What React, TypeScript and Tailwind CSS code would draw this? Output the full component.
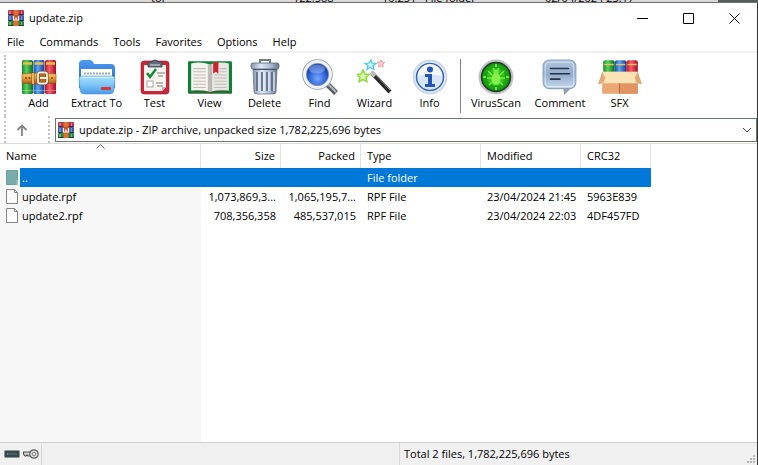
import { useState } from 'react';
import type { ReactNode } from 'react';

const BooksIcon = ({ className }: { className: string }) => (
  <svg viewBox="0 0 16 16" className={className}>
    <rect x="0" y="0" width="16" height="5" rx="1" fill="#b8354f" />
    <rect x="0" y="5" width="16" height="6" rx="1" fill="#3a59b4" />
    <rect x="0" y="11" width="16" height="5" rx="1" fill="#1f8a41" />
    <path d="M0 4.500h16M0 10.500h16M0 15.500h16" stroke="#232338" strokeOpacity=".75" strokeWidth="1" />
    <path d="M2 1v3M2 12v3" stroke="#f0e2c0" strokeOpacity=".8" strokeWidth="1" />
    <path d="M2 6v4" stroke="#c9d6f5" strokeOpacity=".8" strokeWidth="1" />
    <path d="M13.500 1v3M13.500 6v4M13.500 12v3" stroke="#e8c8c8" strokeOpacity=".5" strokeWidth="1" />
    <rect x="5.500" y="0" width="5" height="16" fill="#e2702c" />
    <rect x="4.500" y="5" width="7" height="6" fill="#c2542c" />
    <path d="M5.500 6v4h5V6M8 7.500V10" stroke="#fff" strokeWidth="1.200" fill="none" />
  </svg>
);

const Icons = {
  add: (
    <svg viewBox="0 0 36 36" className="w-9 h-9">
      <defs>
        <linearGradient id="bookG"><stop offset="0" stopColor="#128a2c" /><stop offset=".4" stopColor="#58d05a" /><stop offset="1" stopColor="#0b6b20" /></linearGradient>
        <linearGradient id="bookB"><stop offset="0" stopColor="#1b4fae" /><stop offset=".4" stopColor="#5aa5f2" /><stop offset="1" stopColor="#163a8e" /></linearGradient>
        <linearGradient id="bookR"><stop offset="0" stopColor="#b3122a" /><stop offset=".4" stopColor="#fb5a68" /><stop offset="1" stopColor="#a30d22" /></linearGradient>
        <linearGradient id="strap" x2="0" y2="1"><stop offset="0" stopColor="#f9d27c" /><stop offset=".5" stopColor="#e59a36" /><stop offset="1" stopColor="#a55b16" /></linearGradient>
      </defs>
      <rect x="1" y="1" width="11" height="34" rx="1.5" fill="url(#bookG)" />
      <rect x="12.5" y="1" width="11" height="34" rx="1.5" fill="url(#bookB)" />
      <rect x="24" y="1" width="11" height="34" rx="1.5" fill="url(#bookR)" />
      <path d="M2 4.500h9M13.500 4.500h9M25 4.500h9" stroke="#eac04a" strokeWidth="2.500" />
      <path d="M1 31.500h11M12.500 31.500h11M24 31.500h11" stroke="#fff" strokeOpacity=".35" />
      <path d="M1 15q17-2 34 0v9q-17 2-34 0z" fill="url(#strap)" stroke="#8d4a12" strokeWidth=".6" />
      <path d="M12 13.500v12" stroke="#8d4a12" strokeWidth="3" />
      <path d="M12 14v11" stroke="#ffd78a" strokeWidth="1.500" />
      <rect x="17" y="13.500" width="9" height="11" rx="2" fill="#b8671c" stroke="#6b4a22" strokeWidth="3" />
      <rect x="17" y="13.500" width="9" height="11" rx="2" fill="none" stroke="#f0ece2" strokeWidth="1.800" />
      <path d="M19 19h8" stroke="#f2f2f2" strokeWidth="2" />
      <circle cx="5" cy="19" r="1" fill="#7c3f0c" /><circle cx="8.500" cy="19" r="1" fill="#7c3f0c" /><circle cx="31" cy="19" r="1" fill="#7c3f0c" />
    </svg>
  ),
  extract: (
    <svg viewBox="0 0 38 36" className="w-10 h-9">
      <defs>
        <linearGradient id="folderBack" x2="0" y2="1"><stop offset="0" stopColor="#4d9bf0" /><stop offset="1" stopColor="#1f5fca" /></linearGradient>
        <linearGradient id="folderFront" x2="0" y2="1"><stop offset="0" stopColor="#a8e0fb" /><stop offset=".5" stopColor="#7cc5f7" /><stop offset="1" stopColor="#4a98e6" /></linearGradient>
      </defs>
      <path d="M1 5q0-4 4-4h7q2 0 3 2l1 2h17q4 0 4 4v20H1z" fill="url(#folderBack)" />
      <path d="M3 10h31v10H3z" fill="#fff" />
      <path d="M6 14.500h26" stroke="#9dabba" strokeWidth="2" strokeDasharray="2 1" />
      <path d="M1 20q0-3 3-3h30q3 0 3 3l-1 11q-.5 4-4 4H6q-3.500 0-4-4z" fill="url(#folderFront)" stroke="#559ce4" strokeWidth=".6" />
      <path d="M3 18.500h32" stroke="#d4f2ff" />
      <rect x="23" y="28" width="10" height="3" rx="1" fill="#d93636" />
    </svg>
  ),
  test: (
    <svg viewBox="0 0 30 36" className="w-8 h-9">
      <rect x="1" y="2" width="28" height="33" rx="3" fill="#c9273a" stroke="#9c1325" strokeWidth=".6" />
      <path d="M4 6h22v22l-4 4H4z" fill="#f6f4ef" />
      <path d="M26 28h-4v4z" fill="#b7b7b7" />
      <path d="M8 8V4q0-1 1-1h3q0-2 3-2t3 2h3q1 0 1 1v4z" fill="#606a78" stroke="#3d4149" strokeWidth=".8" />
      <path d="M10 6h10" stroke="#dfe3ea" />
      <path d="M7 14l3 4 6-8" fill="none" stroke="#19873b" strokeWidth="2.500" />
      <path d="M17 14h8M18 17h5M16 24h7M17 27h6" stroke="#7b7b7b" />
      <rect x="7" y="22" width="6" height="6" fill="#fff" stroke="#a7a7a7" />
    </svg>
  ),
  view: (
    <svg viewBox="0 0 42 34" className="w-11 h-9">
      <rect x="0" y="2" width="42" height="31" rx="1" fill="#128036" />
      <path d="M3 4q9-2 18 1v26q-9-2-18-1z" fill="#f4f2ee" />
      <path d="M39 4q-9-2-18 1v26q9-2 18-1z" fill="#e9e7e3" />
      <path d="M19 5h4v26h-4z" fill="#9b9690" opacity=".6" />
      <path d="M5 9h12M5 12h12M5 15h12M5 18h12M5 21h12M5 24h12M5 27h12M30 9h7M30 12h7M25 15h12M25 18h12M25 21h12M25 24h12M25 27h12" stroke="#c2beb7" strokeWidth="1" />
      <path d="M24 3h5v11l-2.500-2-2.500 2z" fill="#cf2230" />
      <path d="M2 32q10-2 19 0 9-2 19 0" stroke="#63452d" strokeWidth="1" fill="none" />
    </svg>
  ),
  trash: (
    <svg viewBox="0 0 30 36" className="w-8 h-9">
      <defs><linearGradient id="bin"><stop offset="0" stopColor="#8595ab" /><stop offset=".35" stopColor="#dce8f5" /><stop offset=".7" stopColor="#abbcd2" /><stop offset="1" stopColor="#66758a" /></linearGradient></defs>
      <path d="M10 4V1h10v3" fill="none" stroke="#717b87" strokeWidth="2" />
      <path d="M3 10h24l-1 23q0 2-3 2H7q-3 0-3-2z" fill="url(#bin)" stroke="#5d6b7d" strokeWidth=".7" />
      <path d="M7 13v19M12 13v19M17 13v19M22 13v19" stroke="#5f7088" strokeWidth="1.800" />
      <path d="M9 13v19M14 13v19M19 13v19M24 13v19" stroke="#edf4fa" strokeWidth="1.200" />
      <rect x="1" y="4" width="28" height="6" rx="2" fill="url(#bin)" stroke="#5c6673" strokeWidth=".8" />
      <path d="M3 10.500h24" stroke="#4a5665" />
    </svg>
  ),
  find: (
    <svg viewBox="0 0 36 36" className="w-9 h-9">
      <defs><radialGradient id="lens" cy=".65"><stop offset="0" stopColor="#78a8ff" /><stop offset=".6" stopColor="#3269dc" /><stop offset="1" stopColor="#173fa8" /></radialGradient></defs>
      <path d="M24 24l10 10" stroke="#5b5f64" strokeWidth="5.500" />
      <path d="M25 24l9 9" stroke="#b2b6bb" strokeWidth="2" />
      <circle cx="15.500" cy="15.500" r="13" fill="url(#lens)" stroke="#8d98a5" strokeWidth="4.500" />
      <circle cx="15.500" cy="15.500" r="13" fill="none" stroke="#eef2f5" strokeWidth="3" />
      <ellipse cx="15" cy="10" rx="8" ry="4.500" fill="#b8d1ff" opacity=".4" />
    </svg>
  ),
  wizard: (
    <svg viewBox="0 0 36 36" className="w-9 h-9">
      <path d="M15 14l18 19" stroke="#292929" strokeWidth="4" />
      <path d="M16 13l17 18" stroke="#929292" strokeWidth="1" />
      <path d="M14 13l4 4" stroke="#bdbdbd" strokeWidth="4" />
      <path d="M6 11l2 4 4 .5-3 3 1 4-4-2-4 2 1-4-3-3 4-.5z" fill="#d6f7a8" stroke="#8edb3c" strokeWidth="1.500" />
      <path d="M14 1l1 3 4 .5-3 2 1 4-4-2-3 2 1-4-3-2 4-.5z" fill="#c8f6ff" stroke="#4cc6ec" strokeWidth="1.200" />
      <path d="M24 1l.8 2 3 .4-2 1.600.4 3-2.200-1.300L21.500 8l.6-2.700-2-1.900 2.700-.4z" fill="#ffd3d6" stroke="#f08791" strokeWidth=".8" />
    </svg>
  ),
  info: (
    <svg viewBox="0 0 36 36" className="w-9 h-9">
      <circle cx="18" cy="18" r="16.500" fill="#e4edf8" stroke="#c6d4e6" strokeWidth="1.500" />
      <circle cx="18" cy="18" r="13.500" fill="#d8e6f8" stroke="#3866ba" strokeWidth="1.500" />
      <path d="M6 17a12 12 0 0124 0q-12-3-24 0" fill="#fff" opacity=".7" />
      <circle cx="18" cy="10.500" r="3" fill="#2454b8" />
      <path d="M13 15h7v10h3v3H13v-3h3v-7h-3z" fill="#2454b8" />
    </svg>
  ),
  virus: (
    <svg viewBox="0 0 36 36" className="w-9 h-9">
      <defs><radialGradient id="radar"><stop offset="0" stopColor="#5fe024" /><stop offset=".6" stopColor="#24b815" /><stop offset="1" stopColor="#07770a" /></radialGradient></defs>
      <circle cx="18" cy="18" r="16" fill="url(#radar)" stroke="#c2c3c9" strokeWidth="3" />
      <circle cx="18" cy="18" r="14.500" fill="none" stroke="#253b27" strokeWidth="1.500" />
      <path d="M18 4v28M4 18h28M8 8l20 20M28 8L8 28" stroke="#129a0f" strokeWidth=".7" />
      <circle cx="18" cy="18" r="10" fill="none" stroke="#168c10" strokeWidth=".8" />
      <path d="M18 5v3M18 28v3M5 18h3M28 18h3" stroke="#8cf164" strokeWidth="1.500" />
      <path d="M10 12l4 4M26 12l-4 4M9 19h5M27 19h-5M11 26l4-4M25 26l-4-4M15 9l2 3M21 9l-2 3" stroke="#78e947" strokeWidth="1.500" />
      <ellipse cx="18" cy="20" rx="4.500" ry="6" fill="#86f04e" /><circle cx="18" cy="13" r="2.500" fill="#78e947" />
    </svg>
  ),
  comment: (
    <svg viewBox="0 0 34 34" className="w-9 h-9">
      <defs><linearGradient id="bubble" x2="0" y2="1"><stop offset="0" stopColor="#b3c7df" /><stop offset=".5" stopColor="#93abcd" /><stop offset="1" stopColor="#cad9eb" /></linearGradient></defs>
      <path d="M20 27h8l-7 7z" fill="#8f9fb3" />
      <rect x="1" y="1" width="31" height="27" rx="6" fill="url(#bubble)" stroke="#8fa3bd" />
      <rect x="3" y="3" width="27" height="23" rx="4" fill="none" stroke="#e2edf8" strokeOpacity=".7" />
      <path d="M8 9h17M8 14h18M8 19h9" stroke="#273447" strokeWidth="1.500" strokeLinecap="round" />
    </svg>
  ),
  sfx: (
    <svg viewBox="0 0 42 34" className="w-11 h-9">
      <rect x="5" y="1" width="11" height="18" rx="2" fill="url(#bookG)" />
      <rect x="16" y="1" width="11" height="18" rx="2" fill="url(#bookB)" />
      <rect x="27" y="1" width="11" height="18" rx="2" fill="url(#bookR)" />
      <path d="M6 5h9M17 5h9M28 5h9" stroke="#e5c25b" strokeWidth="1.500" />
      <path d="M4 12h34v21H4z" fill="#e9a774" />
      <path d="M21 20h17v13H21z" fill="#df9462" />
      <path d="M4 12h34l1 11H3z" fill="#fae3b4" />
      <path d="M4 12l-4 12 5-1 2-5zM38 12l4 12-5-1-2-5z" fill="#e0aa7a" />
      <path d="M20.500 23v10" stroke="#b86e43" />
    </svg>
  ),
};

type Tool = { label: string; icon: ReactNode; width: string };

const tools: Tool[] = [
  { label: 'Add', icon: Icons.add, width: 'w-[55px]' },
  { label: 'Extract To', icon: Icons.extract, width: 'w-[61px]' },
  { label: 'Test', icon: Icons.test, width: 'w-[55px]' },
  { label: 'View', icon: Icons.view, width: 'w-[55px]' },
  { label: 'Delete', icon: Icons.trash, width: 'w-[55px]' },
  { label: 'Find', icon: Icons.find, width: 'w-[55px]' },
  { label: 'Wizard', icon: Icons.wizard, width: 'w-[55px]' },
  { label: 'Info', icon: Icons.info, width: 'w-[55px]' },
];

const extraTools: Tool[] = [
  { label: 'VirusScan', icon: Icons.virus, width: 'w-16' },
  { label: 'Comment', icon: Icons.comment, width: 'w-16' },
  { label: 'SFX', icon: Icons.sfx, width: 'w-[55px]' },
];

const files = [
  { name: '..', size: '', packed: '', type: 'File folder', modified: '', crc: '' },
  { name: 'update.rpf', size: '1,073,869,3...', packed: '1,065,195,7...', type: 'RPF File', modified: '23/04/2024 21:45', crc: '5963E839' },
  { name: 'update2.rpf', size: '708,356,358', packed: '485,537,015', type: 'RPF File', modified: '23/04/2024 22:03', crc: '4DF457FD' },
];

const ToolButton = ({ label, icon, width }: Tool) => (
  <button className={`${width} shrink-0 flex flex-col items-center whitespace-nowrap`}>
    {icon}
    <span>{label}</span>
  </button>
);

const FileIcon = ({ folder }: { folder: boolean }) => (
  <svg viewBox="0 0 14 17" className="w-3.5 h-[17px] shrink-0">
    {folder ? (
      <>
        <path d="M1.500 1.500h11v14h-11z" fill="#79abaa" stroke="#6ba09f" />
        <path d="M11 11h2v5h-2z" fill="#8bbdbc" />
      </>
    ) : (
      <>
        <path d="M1.500 1.500h8l3 3v11h-11z" fill="#fbfbfb" stroke="#858585" />
        <path d="M9.500 1.500v3h3" fill="none" stroke="#858585" />
      </>
    )}
  </svg>
);

const App = () => {
  const [selected, setSelected] = useState('..');

  return (
    <div className="h-screen flex flex-col overflow-hidden bg-white font-['Open_Sans','Noto_Sans',sans-serif] text-[11px] leading-4 text-black cursor-default">
      {/* Window behind */}
      <div className="h-[3px] shrink-0 flex items-end overflow-hidden bg-[#d8d8d8] border-b border-[#707070] leading-2 whitespace-nowrap">
        <span className="w-[293px] pl-[151px]">tof</span>
        <span className="w-[89px]">122.588</span>
        <span className="w-[43px]">10.251</span>
        <span className="w-[120px]">File folder</span>
        <span className="w-[173px]">02/04/2024 23:17</span>
        <span className="flex-1 h-3 bg-[#555b58]" />
      </div>

      <div className="flex-1 min-h-0 flex flex-col border-r border-[#333]">
        {/* Title bar */}
        <header className="h-[30px] shrink-0 flex items-center pl-2">
          <BooksIcon className="w-4 h-4" />
          <h1 className="pl-[5px] flex-1">update.zip</h1>
          <button aria-label="Minimize" className="w-[46px] h-full grid place-items-center">
            <svg viewBox="0 0 11 11" className="w-[11px] h-[11px]"><path d="M0 5.500h11" stroke="#000" /></svg>
          </button>
          <button aria-label="Maximize" className="w-[46px] h-full grid place-items-center">
            <svg viewBox="0 0 11 11" className="w-[11px] h-[11px]"><path d="M.5.500h10v10H.5z" stroke="#000" fill="none" /></svg>
          </button>
          <button aria-label="Close" className="w-[46px] h-full grid place-items-center">
            <svg viewBox="0 0 11 11" className="w-[11px] h-[11px]"><path d="M.5.500l10 10M10.500.500l-10 10" stroke="#000" /></svg>
          </button>
        </header>

        <nav className="h-[18px] shrink-0 flex items-center gap-[15px] pl-[7px]">
          {['File', 'Commands', 'Tools', 'Favorites', 'Options', 'Help'].map((item) => (
            <button key={item}>{item}</button>
          ))}
        </nav>

        {/* Toolbar */}
        <div className="h-[65px] shrink-0 flex pl-1 pt-1.5 border-t-2 border-[#f0f0f0]">
          <div className="w-[7px] shrink-0 -mt-1 border-l-2 border-dotted border-[#c4c4c4]" />
          {tools.map((t) => <ToolButton key={t.label} {...t} />)}
          <div className="w-px h-[54px] shrink-0 mx-[3px] bg-[#808080]" />
          {extraTools.map((t) => <ToolButton key={t.label} {...t} />)}
        </div>

        {/* Address bar */}
        <div className="h-[27px] shrink-0 flex items-center pl-1">
          <div className="w-[7px] h-full border-l-2 border-dotted border-[#c4c4c4]" />
          <button aria-label="Up one level" className="w-[37px] h-full pl-[5px] flex items-center">
            <svg viewBox="0 0 12 12" className="w-3 h-3"><path d="M6 12V1.500M1.500 6L6 1.500 10.500 6" fill="none" stroke="#858585" strokeWidth="1.800" /></svg>
          </button>
          <div className="w-[7px] h-full border-l-2 border-dotted border-[#c4c4c4]" />
          <div className="flex-1 h-6 flex items-center pl-0.5 pr-1 border border-[#6f756f]">
            <BooksIcon className="w-4 h-4" />
            <select aria-label="Address" className="flex-1 appearance-none pl-[5px] outline-none">
              <option>update.zip - ZIP archive, unpacked size 1,782,225,696 bytes</option>
            </select>
            <svg viewBox="0 0 10 6" className="w-2.5 h-1.5 pointer-events-none"><path d="M1 1l4 4 4-4" fill="none" stroke="#444" /></svg>
          </div>
        </div>

        {/* File list */}
        <main className="flex-1 min-h-0 border-t border-[#dcdcdc]">
          <table className="w-full h-full table-fixed border-separate border-spacing-0 text-left">
            <colgroup>
              <col className="w-[201px]" />
              <col className="w-20" />
              <col className="w-20" />
              <col className="w-[120px]" />
              <col className="w-[100px]" />
              <col className="w-[70px]" />
              <col />
            </colgroup>
            <thead>
              <tr className="h-6 *:font-normal *:p-0 *:border-r *:border-[#e2e2e2]">
                <th className="relative">
                  <span className="pl-1.5">Name</span>
                  <svg viewBox="0 0 9 5" className="absolute top-0 left-24 w-[9px] h-[5px]"><path d="M.5 4.500l4-4 4 4" fill="none" stroke="#666" /></svg>
                </th>
                <th className="text-right"><span className="pr-[5px]">Size</span></th>
                <th className="text-right"><span className="pr-[5px]">Packed</span></th>
                <th><span className="pl-1.5">Type</span></th>
                <th><span className="pl-1.5">Modified</span></th>
                <th><span className="pl-1.5">CRC32</span></th>
                <td className="border-r-0!" />
              </tr>
            </thead>
            <tbody>
              {files.map((f) => {
                const active = f.name === selected;
                const cell = active ? 'p-0 bg-[#0078d7] text-white' : 'p-0';
                return (
                  <tr key={f.name} className="h-[19px] whitespace-nowrap" onClick={() => setSelected(f.name)}>
                    <td className="p-0 bg-[#f7f7f7]">
                      <div className="flex items-center pl-[5px] gap-px">
                        <FileIcon folder={f.name === '..'} />
                        <span className={`flex-1 h-[19px] pl-0.5 leading-[19px] ${active ? 'bg-[#0078d7] text-white' : ''}`}>{f.name}</span>
                      </div>
                    </td>
                    <td className={`${cell} text-right`}><span className="pr-[5px]">{f.size}</span></td>
                    <td className={`${cell} text-right`}><span className="pr-[5px]">{f.packed}</span></td>
                    <td className={cell}><span className="pl-1.5">{f.type}</span></td>
                    <td className={cell}><span className="pl-1.5">{f.modified}</span></td>
                    <td className={cell}><span className="pl-1.5">{f.crc}</span></td>
                    <td className="p-0" />
                  </tr>
                );
              })}
              <tr>
                <td className="p-0 bg-[#f7f7f7]" />
                <td colSpan={6} />
              </tr>
            </tbody>
          </table>
        </main>

        {/* Status bar */}
        <footer className="h-[23px] shrink-0 flex items-stretch bg-[#f0f0f0] border-t border-[#d0d0d0]">
          <div className="w-[42px] shrink-0 flex items-center gap-[3px] pl-1 border-r border-[#d8d8d8]">
            <svg viewBox="0 0 16 8" className="w-4 h-2 shrink-0"><rect x=".5" y=".5" width="15" height="7" rx="1" fill="#35494c" stroke="#8c9696" /><path d="M3 4h10" stroke="#5f7274" /><path d="M3 4h1" stroke="#79dc89" /></svg>
            <svg viewBox="0 0 16 10" className="w-4 h-2.5 shrink-0"><path d="M8 3H.5v2l1.500 2h1l1-1 1 1h3" fill="#d5d5d5" stroke="#4a4a4a" strokeWidth="1.200" /><circle cx="11" cy="5" r="4.200" fill="#e3e3e3" stroke="#5a5a5a" strokeWidth="1.200" /><circle cx="11" cy="5" r="1.800" fill="#fff" stroke="#777" /></svg>
          </div>
          <div className="flex-1 border-r border-[#d8d8d8]" />
          <div className="flex-1 flex items-center justify-between">
            <span className="pl-1">Total 2 files, 1,782,225,696 bytes</span>
            <svg viewBox="0 0 9 9" className="w-[9px] h-[9px] self-end mb-0.5 mr-0.5" fill="#b5b5b5"><path d="M7 1h2v2H7zM7 4h2v2H7zM7 7h2v2H7zM4 4h2v2H4zM4 7h2v2H4zM1 7h2v2H1z" /></svg>
          </div>
        </footer>
      </div>
    </div>
  );
};

export default App;
